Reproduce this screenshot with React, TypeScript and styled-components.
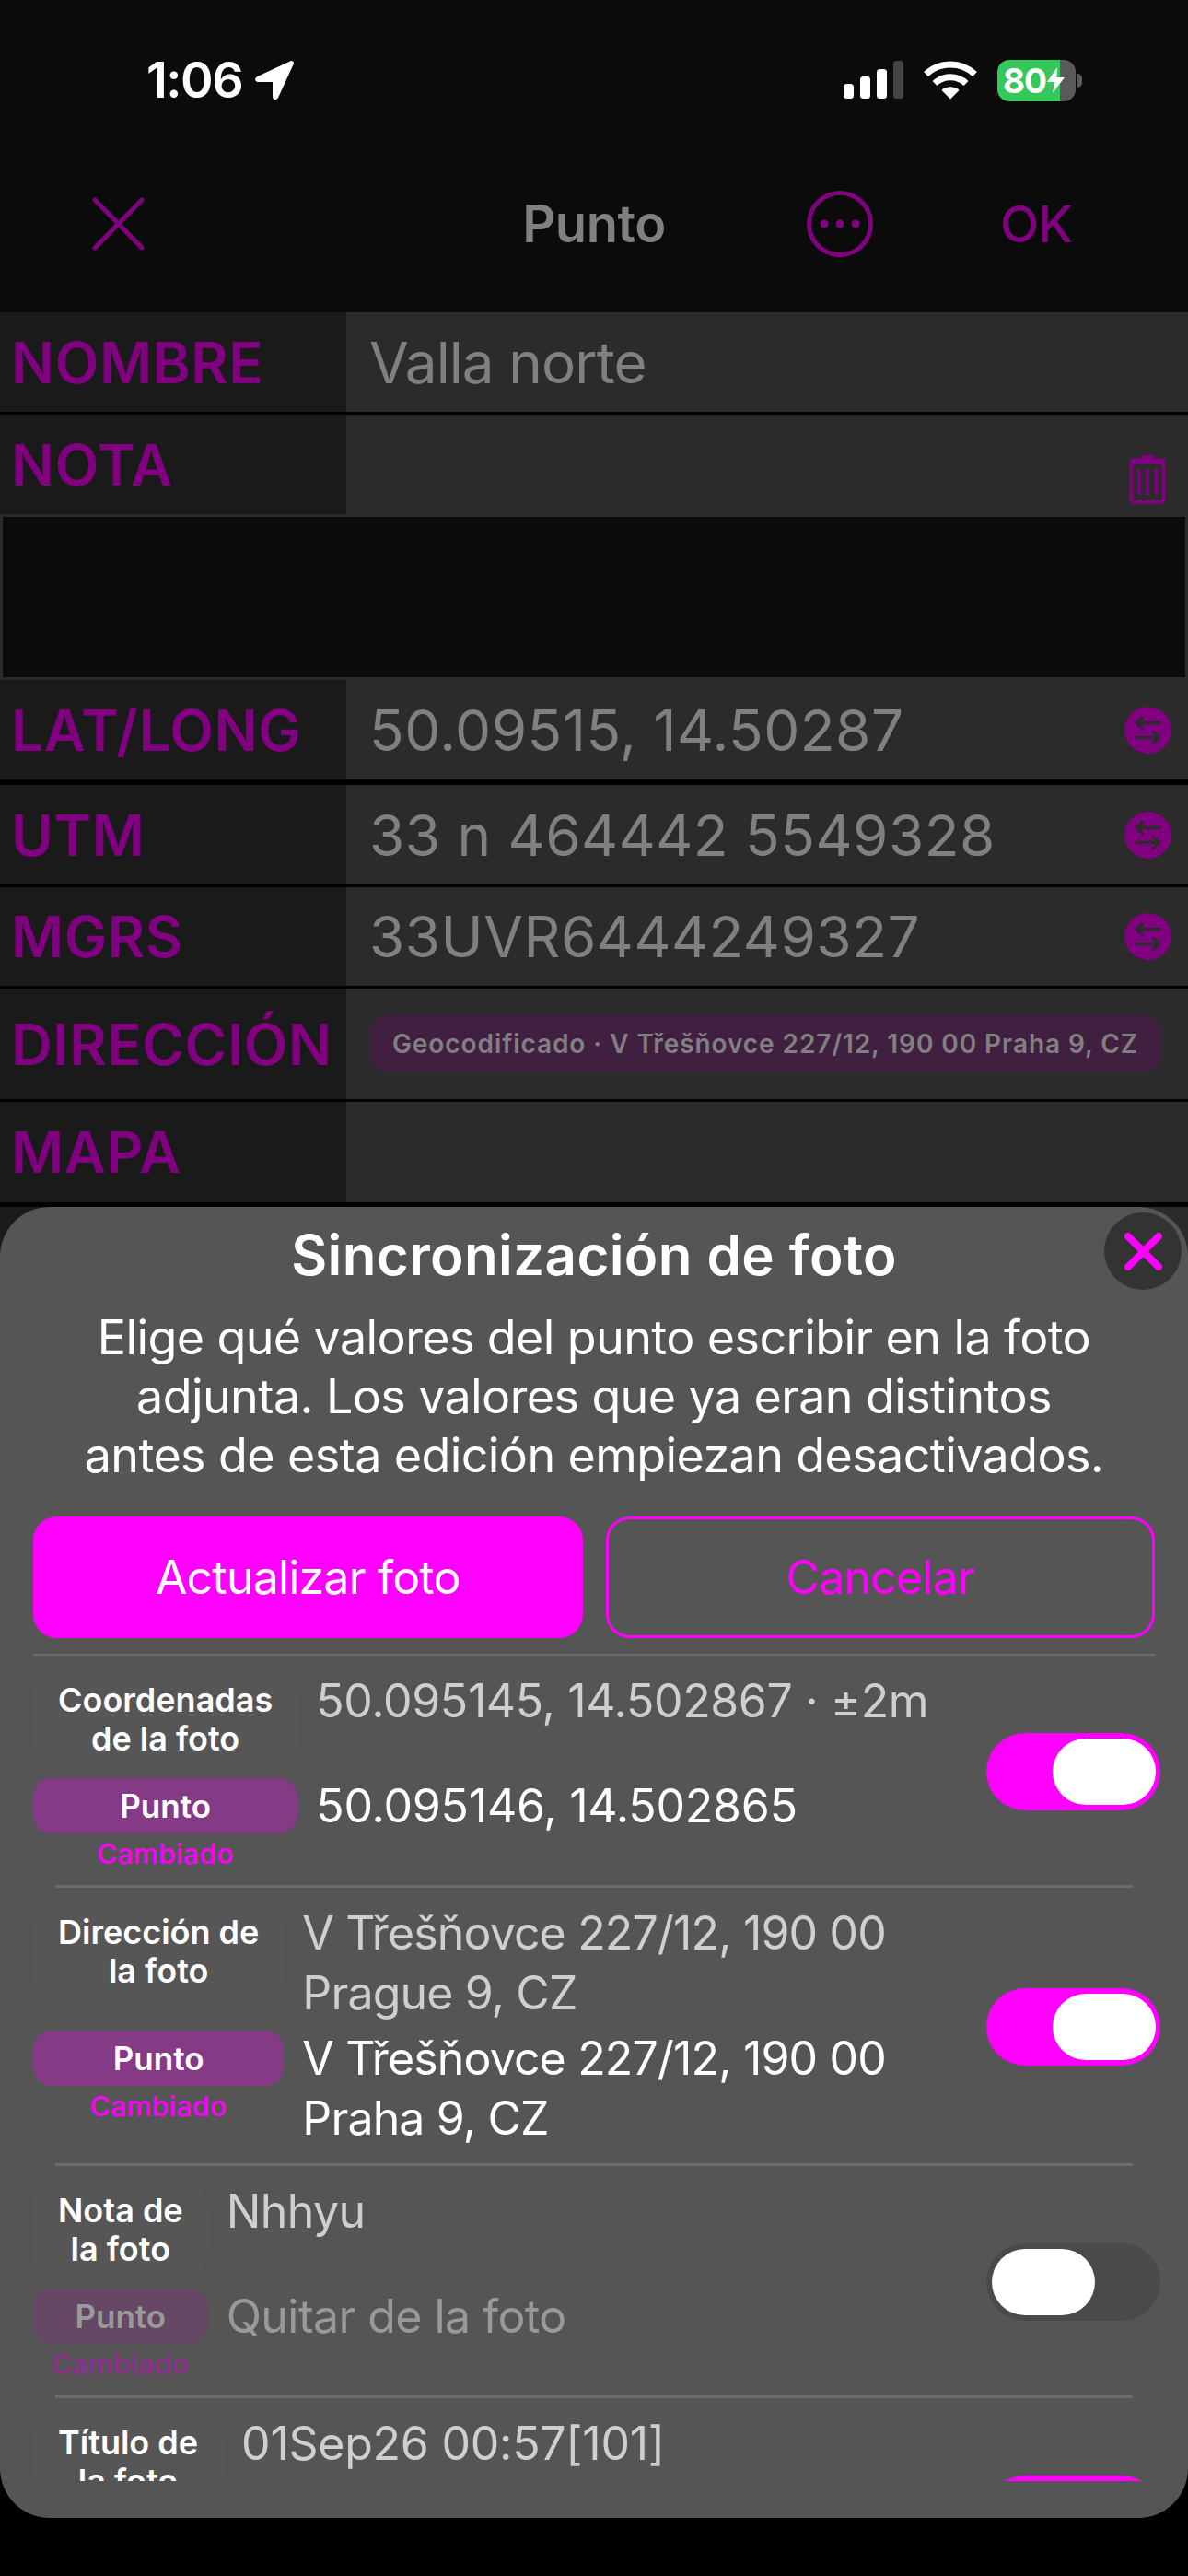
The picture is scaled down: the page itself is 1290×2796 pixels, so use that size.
import * as React from 'react'
import styled, { createGlobalStyle } from 'styled-components'

const PURPLE = '#800080'
const MAGENTA = '#ff00ff'

const GlobalStyle = createGlobalStyle`
  html, body {
    margin: 0;
    padding: 0;
    background: #000;
  }
  body {
    font-family: Inter, "Liberation Sans", sans-serif;
    -webkit-font-smoothing: antialiased;
  }
`

const Screen = styled.div`
  position: relative;
  width: 1290px;
  height: 2796px;
  overflow: hidden;
  background: #000;
`

const Header = styled.header`
  height: 339px;
  background: #0b0b0b;
`

const StatusBar = styled.div`
  height: 174px;
  padding: 0 122px 0 159px;
  display: flex;
  align-items: center;
  justify-content: space-between;
  box-sizing: border-box;
`

const StatusGroup = styled.div<{ $gap: number }>`
  display: flex;
  align-items: center;
  gap: ${p => p.$gap}px;
`

const Time = styled.span`
  color: #fff;
  font-size: 54px;
  font-weight: 600;
  letter-spacing: -1.5px;
  line-height: 1;
`

const Battery = styled.div`
  position: relative;
  width: 85px;
  height: 45px;
  padding-left: 6px;
  box-sizing: border-box;
  display: flex;
  align-items: center;
  gap: 1px;
  border-radius: 13px;
  background: linear-gradient(to right, #34c759 0 68px, #5a5a5a 68px);
  color: #fff;
  font-size: 37px;
  font-weight: 700;
  letter-spacing: -1px;

  &::after {
    content: '';
    position: absolute;
    left: 87px;
    top: 15px;
    width: 5px;
    height: 15px;
    border-radius: 0 8px 8px 0;
    background: #5a5a5a;
  }
`

const NavBar = styled.nav`
  height: 138px;
  padding: 0 126px;
  display: grid;
  grid-template-columns: 1fr auto 1fr;
  align-items: center;
`

const NavClose = styled.svg`
  margin-left: -26px;
`

const NavTitle = styled.h1`
  margin: 0;
  color: #808080;
  font-size: 56px;
  font-weight: 600;
  letter-spacing: -0.5px;
`

const NavActions = styled.div`
  display: flex;
  justify-content: flex-end;
  align-items: center;
  gap: 138px;
`

const NavOk = styled.span`
  color: ${PURPLE};
  font-size: 55px;
  font-weight: 500;
  letter-spacing: -1px;
`

const FormRow = styled.div<{ $height: number; $gap?: number }>`
  display: flex;
  height: ${p => p.$height}px;
  margin-bottom: ${p => p.$gap ?? 0}px;
`

const FieldLabel = styled.div`
  width: 376px;
  flex: none;
  padding-left: 12px;
  box-sizing: border-box;
  display: flex;
  align-items: center;
  background: #1a1a1a;
  color: ${PURPLE};
  font-size: 62px;
  font-weight: 600;
  letter-spacing: 0.6px;
  white-space: nowrap;
`

const FieldValue = styled.div<{ $align?: string }>`
  flex: 1;
  padding: 0 18px 0 25px;
  display: flex;
  align-items: ${p => p.$align ?? 'center'};
  justify-content: space-between;
  background: #2b2b2b;
  color: #808080;
  font-size: 62px;
  letter-spacing: -0.9px;
`

const CoordText = styled.span`
  letter-spacing: 0.5px;
`

const TrashSlot = styled.div`
  margin: 0 5px 11px auto;
  display: flex;
`

const NoteBox = styled.div`
  height: 180px;
  box-sizing: border-box;
  border: 3px solid #2b2b2b;
  background: #0b0b0b;
`

const GeoChip = styled.div`
  flex: 1;
  height: 62px;
  margin-right: 11px;
  display: flex;
  align-items: center;
  justify-content: center;
  border-radius: 20px;
  background: #411f41;
  font-size: 28px;
  font-weight: 600;
  letter-spacing: 0.93px;
  white-space: nowrap;
`

const Sheet = styled.section`
  position: absolute;
  left: 0;
  right: 0;
  top: 1310px;
  height: 1423px;
  padding: 16px 0 40px;
  box-sizing: border-box;
  display: flex;
  flex-direction: column;
  border-radius: 54px;
  background: #555556;
  color: #fff;
`

const CloseButton = styled.div`
  position: absolute;
  top: 6px;
  right: 7px;
  width: 84px;
  height: 84px;
  border-radius: 50%;
  background: #333;
  display: flex;
  align-items: center;
  justify-content: center;
`

const SheetTitle = styled.h2`
  margin: 0;
  text-align: center;
  font-size: 60px;
  line-height: 72px;
  font-weight: 600;
  letter-spacing: 0.4px;
`

const SheetText = styled.p`
  margin: 22px 0 34px;
  text-align: center;
  font-size: 52px;
  line-height: 64px;
  letter-spacing: -0.6px;
`

const ButtonRow = styled.div`
  display: grid;
  grid-template-columns: 1fr 1fr;
  gap: 25px;
  padding: 0 36px;
`

const ActionButton = styled.div<{ $filled?: boolean }>`
  height: 132px;
  box-sizing: border-box;
  display: flex;
  align-items: center;
  justify-content: center;
  border-radius: 26px;
  border: 3px solid ${MAGENTA};
  background: ${p => (p.$filled ? MAGENTA : 'transparent')};
  color: ${p => (p.$filled ? '#fff' : MAGENTA)};
  font-size: 50px;
  letter-spacing: -0.8px;
`

const TopRule = styled.div`
  height: 2px;
  margin: 17px 36px 0;
  background: #6c6c6c;
`

const SyncList = styled.div`
  flex: 1;
  min-height: 0;
  overflow: hidden;
  padding: 0 30px 0 36px;
`

const Rule = styled.div`
  height: 3px;
  margin: 0 30px 0 24px;
  background: #6c6c6c;
`

const SyncRow = styled.div`
  padding: 19px 0 16px;
  display: grid;
  grid-template-columns: auto 1fr auto;
  column-gap: 20px;
  row-gap: 14px;
`

const PhotoLabel = styled.div`
  height: 100px;
  padding: 8px 27px;
  box-sizing: border-box;
  border-radius: 24px;
  background: #565657;
  text-align: center;
  font-size: 36px;
  line-height: 42px;
  font-weight: 600;
  white-space: nowrap;
`

const PointCell = styled.div`
  height: 100px;
`

const PointPill = styled.div<{ $dim?: boolean }>`
  height: 60px;
  display: flex;
  align-items: center;
  justify-content: center;
  border-radius: 20px;
  background: ${p => (p.$dim ? '#664766' : '#853a85')};
  color: ${p => (p.$dim ? '#9a9a9a' : '#fff')};
  font-size: 35px;
  font-weight: 600;
`

const ChangedTag = styled.div<{ $dim?: boolean }>`
  margin-top: 4px;
  text-align: center;
  color: ${p => (p.$dim ? '#952c95' : MAGENTA)};
  font-size: 30px;
  line-height: 36px;
  font-weight: 500;
  letter-spacing: 0.4px;
`

const ValueText = styled.div<{
  $tone: 'photo' | 'point' | 'muted'
  $second?: boolean
  $tracking: number
}>`
  margin: ${p => (p.$second ? '-2px 0 0' : '-2px 0 -6px')};
  color: ${p => (p.$tone === 'photo' ? '#cfcfcf' : p.$tone === 'muted' ? '#999' : '#fff')};
  font-size: 50px;
  line-height: 65px;
  letter-spacing: ${p => p.$tracking}px;
`

const Toggle = styled.div<{ $on: boolean }>`
  grid-column: 3;
  grid-row: 1 / span 2;
  align-self: center;
  width: 189px;
  height: 84px;
  padding: 0 ${p => (p.$on ? 5 : 6)}px;
  box-sizing: border-box;
  display: flex;
  align-items: center;
  justify-content: ${p => (p.$on ? 'flex-end' : 'flex-start')};
  border-radius: 42px;
  background: ${p => (p.$on ? MAGENTA : '#4a4a4c')};

  &::after {
    content: '';
    width: 112px;
    height: 72px;
    border-radius: 36px;
    background: #fff;
  }
`

const SwapIcon = () => (
  <svg width="51" height="51" viewBox="0 0 51 51">
    <circle cx="25.5" cy="25.5" r="25.5" fill={PURPLE} />
    <g fill="none" stroke="#2b2b2b" strokeWidth="3.5" strokeLinecap="round" strokeLinejoin="round">
      <path d="M38 17.5H13.5M19.5 11.5l-6 6 6 6" />
      <path d="M13 33.5h24.5M31.5 27.5l6 6-6 6" />
    </g>
  </svg>
)

const TrashIcon = () => (
  <svg width="42" height="54" viewBox="0 0 42 54" fill="none" stroke={PURPLE}>
    <path d="M14 5.5Q14 1 17 1h8q3 0 3 4.5" fill={PURPLE} strokeWidth="1" />
    <path d="M0 8.5L4 5h34l4 3.5z" fill={PURPLE} strokeWidth="1" />
    <rect x="3.5" y="9" width="35" height="43" rx="4" strokeWidth="4" />
    <path d="M12 17v26M21 17v26M30.5 17v26" strokeWidth="3.5" strokeLinecap="round" />
  </svg>
)

const rows = [
  { label: 'LAT/LONG', value: '50.09515, 14.50287', height: 108, gap: 6 },
  { label: 'UTM', value: '33 n 464442 5549328', height: 108, gap: 3 },
  { label: 'MGRS', value: '33UVR6444249327', height: 107, gap: 3 },
]

type SyncItem = {
  label: string[]
  photo: string
  photoTracking: number
  point?: string
  pointTracking?: number
  on: boolean
  muted?: boolean
}

// the last row runs off the bottom of the scroll area, so only its top half is filled in
const syncItems: SyncItem[] = [
  {
    label: ['Coordenadas', 'de la foto'],
    photo: '50.095145, 14.502867 · ±2m',
    photoTracking: -0.35,
    point: '50.095146, 14.502865',
    pointTracking: -0.2,
    on: true,
  },
  {
    label: ['Dirección de', 'la foto'],
    photo: 'V Třešňovce 227/12, 190 00 Prague 9, CZ',
    photoTracking: -0.85,
    point: 'V Třešňovce 227/12, 190 00 Praha 9, CZ',
    pointTracking: -0.85,
    on: true,
  },
  {
    label: ['Nota de', 'la foto'],
    photo: 'Nhhyu',
    photoTracking: -0.55,
    point: 'Quitar de la foto',
    pointTracking: -0.55,
    on: false,
    muted: true,
  },
  {
    label: ['Título de', 'la foto'],
    photo: '01Sep26 00:57[101]',
    photoTracking: -0.25,
    on: true,
  },
]

export default function App() {
  return (
    <Screen>
      <GlobalStyle />
      <Header>
        <StatusBar>
          <StatusGroup $gap={14}>
            <Time>1:06</Time>
            <svg width="42" height="42" viewBox="0 0 42 42">
              <path
                d="M38 .5 2.5 17Q-1 19 .5 21.5 1.5 23 4 23H19V38Q19 42 21.5 42 24 42.5 25.5 39L41.5 4Q42.5 1.5 41 .6 39.5-.3 38 .5Z"
                fill="#fff"
              />
            </svg>
          </StatusGroup>
          <StatusGroup $gap={22}>
            <svg width="65" height="42" viewBox="0 0 65 42">
              <rect x="0" y="25" width="11" height="16" rx="3.5" fill="#fff" />
              <rect x="18" y="17" width="11" height="24" rx="3.5" fill="#fff" />
              <rect x="36" y="9" width="11" height="32" rx="3.5" fill="#fff" />
              <rect x="54" y="0" width="11" height="41" rx="3.5" fill="#444" />
            </svg>
            <svg width="58" height="42" viewBox="0 0 58 42">
              <path d="M29 41.5 19.5 32A14 14 0 0 1 38.5 32Z" fill="#fff" />
              <g fill="none" stroke="#fff" strokeWidth="7">
                <path d="M12 24.5A25 25 0 0 1 46 24.5" />
                <path d="M2.5 14.5A38.5 38.5 0 0 1 55.5 14.5" />
              </g>
            </svg>
            <Battery>
              80
              <svg width="19" height="28" viewBox="0 0 19 28">
                <path d="M11 0 0 16H8L6 28 19 11H10.5Z" fill="#fff" />
              </svg>
            </Battery>
          </StatusGroup>
        </StatusBar>
        <NavBar>
          <NavClose width="57" height="58" viewBox="0 0 57 58">
            <path
              d="M3 3 54 55M54 3 3 55"
              fill="none"
              stroke={PURPLE}
              strokeWidth="5"
              strokeLinecap="round"
            />
          </NavClose>
          <NavTitle>Punto</NavTitle>
          <NavActions>
            <svg width="72" height="72" viewBox="0 0 72 72">
              <circle cx="36" cy="36" r="33.5" fill="none" stroke={PURPLE} strokeWidth="5" />
              <circle cx="19" cy="36" r="4.5" fill={PURPLE} />
              <circle cx="36" cy="36" r="4.5" fill={PURPLE} />
              <circle cx="53" cy="36" r="4.5" fill={PURPLE} />
            </svg>
            <NavOk>OK</NavOk>
          </NavActions>
        </NavBar>
      </Header>

      <FormRow $height={108} $gap={3}>
        <FieldLabel>NOMBRE</FieldLabel>
        <FieldValue>Valla norte</FieldValue>
      </FormRow>
      <FormRow $height={108}>
        <FieldLabel>NOTA</FieldLabel>
        <FieldValue $align="flex-end">
          <TrashSlot>
            <TrashIcon />
          </TrashSlot>
        </FieldValue>
      </FormRow>
      <NoteBox />
      {rows.map(row => (
        <FormRow key={row.label} $height={row.height} $gap={row.gap}>
          <FieldLabel>{row.label}</FieldLabel>
          <FieldValue>
            <CoordText>{row.value}</CoordText>
            <SwapIcon />
          </FieldValue>
        </FormRow>
      ))}
      <FormRow $height={120} $gap={3}>
        <FieldLabel>DIRECCIÓN</FieldLabel>
        <FieldValue>
          <GeoChip>Geocodificado · V Třešňovce 227/12, 190 00 Praha 9, CZ</GeoChip>
        </FieldValue>
      </FormRow>
      <FormRow $height={109} $gap={5}>
        <FieldLabel>MAPA</FieldLabel>
        <FieldValue />
      </FormRow>
      <FormRow $height={108}>
        <FieldLabel />
        <FieldValue />
      </FormRow>

      <Sheet>
        <CloseButton>
          <svg width="41" height="41" viewBox="0 0 41 41">
            <path
              d="M4 4 37 37M37 4 4 37"
              fill="none"
              stroke={MAGENTA}
              strokeWidth="8"
              strokeLinecap="round"
            />
          </svg>
        </CloseButton>
        <SheetTitle>Sincronización de foto</SheetTitle>
        <SheetText>
          Elige qué valores del punto escribir en la foto
          <br />
          adjunta. Los valores que ya eran distintos
          <br />
          antes de esta edición empiezan desactivados.
        </SheetText>
        <ButtonRow>
          <ActionButton $filled>Actualizar foto</ActionButton>
          <ActionButton>Cancelar</ActionButton>
        </ButtonRow>
        <TopRule />
        <SyncList>
          {syncItems.map((item, i) => (
            <React.Fragment key={item.label[0]}>
              {i > 0 && <Rule />}
              <SyncRow>
                <PhotoLabel>
                  {item.label[0]}
                  <br />
                  {item.label[1]}
                </PhotoLabel>
                <ValueText $tone="photo" $tracking={item.photoTracking}>
                  {item.photo}
                </ValueText>
                <Toggle $on={item.on} />
                <PointCell>
                  {item.point && (
                    <>
                      <PointPill $dim={item.muted}>Punto</PointPill>
                      <ChangedTag $dim={item.muted}>Cambiado</ChangedTag>
                    </>
                  )}
                </PointCell>
                {item.point && (
                  <ValueText
                    $tone={item.muted ? 'muted' : 'point'}
                    $second
                    $tracking={item.pointTracking ?? 0}
                  >
                    {item.point}
                  </ValueText>
                )}
              </SyncRow>
            </React.Fragment>
          ))}
        </SyncList>
      </Sheet>
    </Screen>
  )
}
